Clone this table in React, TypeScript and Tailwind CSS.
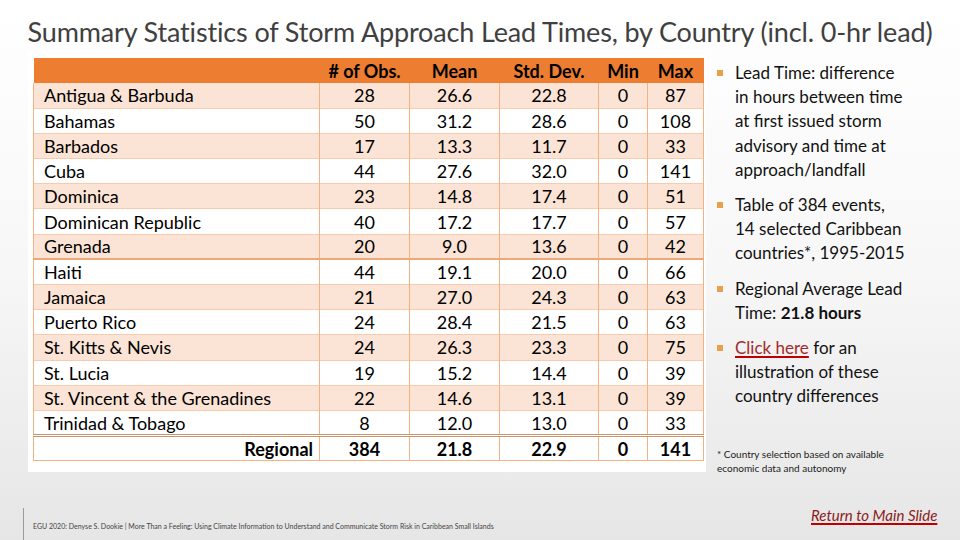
import React from "react";

const rows: [string, string, string, string, string, string][] = [
  ["Antigua & Barbuda", "28", "26.6", "22.8", "0", "87"],
  ["Bahamas", "50", "31.2", "28.6", "0", "108"],
  ["Barbados", "17", "13.3", "11.7", "0", "33"],
  ["Cuba", "44", "27.6", "32.0", "0", "141"],
  ["Dominica", "23", "14.8", "17.4", "0", "51"],
  ["Dominican Republic", "40", "17.2", "17.7", "0", "57"],
  ["Grenada", "20", "9.0", "13.6", "0", "42"],
  ["Haiti", "44", "19.1", "20.0", "0", "66"],
  ["Jamaica", "21", "27.0", "24.3", "0", "63"],
  ["Puerto Rico", "24", "28.4", "21.5", "0", "63"],
  ["St. Kitts & Nevis", "24", "26.3", "23.3", "0", "75"],
  ["St. Lucia", "19", "15.2", "14.4", "0", "39"],
  ["St. Vincent & the Grenadines", "22", "14.6", "13.1", "0", "39"],
  ["Trinidad & Tobago", "8", "12.0", "13.0", "0", "33"],
];

const font = { fontFamily: "Lato, 'Open Sans', sans-serif" };

function Bullet({ children }: { children: React.ReactNode }) {
  return (
    <div className="flex items-start">
      <span className="mt-[9px] mr-[12px] h-[6px] w-[6px] shrink-0 bg-[#E8A04C]" />
      <div className="w-[205px] whitespace-nowrap">{children}</div>
    </div>
  );
}

export default function App() {
  return (
    <div
      className="relative w-[960px] h-[540px] overflow-hidden bg-gradient-to-b from-white via-[#f7f7f7] to-[#e6e6e6] text-black"
      style={font}
    >
      <div className="pt-[15px] text-center text-[27px] leading-[34px] text-[#404040] tracking-[-0.15px]">
        Summary Statistics of Storm Approach Lead Times, by Country (incl. 0-hr lead)
      </div>
      <div className="flex mt-[4px] ml-[28px]">
        <div className="w-[678px] h-[419px] bg-white pt-[5px] pl-[5px]">
          <table className="border-collapse table-fixed w-[670px] text-[18px] leading-none">
            <colgroup>
              <col className="w-[286px]" />
              <col className="w-[90px]" />
              <col className="w-[90px]" />
              <col className="w-[99px]" />
              <col className="w-[49px]" />
              <col className="w-[56px]" />
            </colgroup>
            <thead>
              <tr className="h-[25px] bg-[#ED7D31] font-bold">
                <th></th>
                <th className="text-center">
                  # of Obs.
                </th>
                <th className="text-center">Mean</th>
                <th className="text-center">Std. Dev.</th>
                <th className="text-center">Min</th>
                <th className="text-center">Max</th>
              </tr>
            </thead>
            <tbody>
              {rows.map((r, i) => (
                <tr
                  key={r[0]}
                  className={
                    "h-[25.2px] " +
                    (i % 2 === 0 ? "bg-[#FBE4D5] " : "bg-white ") +
                    (i === 6
                      ? "border-b-2 border-b-[#EDA878] "
                      : i === 13
                      ? "border-b-[3px] border-double border-b-[#C8956A] "
                      : "border-b border-b-[#F8CBAD] ")
                  }
                >
                  <td className="pl-[10px] text-left border-x border-[#F4B183] whitespace-nowrap">{r[0]}</td>
                  {r.slice(1).map((v, j) => (
                    <td key={j} className="text-center border-x border-[#F4B183]">
                      {v}
                    </td>
                  ))}
                </tr>
              ))}
              <tr className="h-[25px] bg-white font-bold border-b border-b-[#F4B183]">
                <td className="pr-[6px] text-right border-x border-[#F4B183]">Regional</td>
                <td className="text-center border-x border-[#F4B183]">384</td>
                <td className="text-center border-x border-[#F4B183]">21.8</td>
                <td className="text-center border-x border-[#F4B183]">22.9</td>
                <td className="text-center border-x border-[#F4B183]">0</td>
                <td className="text-center border-x border-[#F4B183]">141</td>
              </tr>
            </tbody>
          </table>
        </div>
        <div className="ml-[11px] w-[230px] text-[17px] leading-[24.2px] text-[#111]">
          <div className="flex flex-col gap-[11px] pt-[8px]">
            <Bullet>
              Lead Time: difference
              <br />
              in hours between time
              <br />
              at first issued storm
              <br />
              advisory and time at
              <br />
              approach/landfall
            </Bullet>
            <Bullet>
              Table of 384 events,
              <br />
              14 selected Caribbean
              <br />
              countries*, 1995-2015
            </Bullet>
            <Bullet>
              Regional Average Lead
              <br />
              Time: <b>21.8 hours</b>
            </Bullet>
            <Bullet>
              <span className="text-[#A52A2A] underline decoration-[#C00000] decoration-2 underline-offset-2">
                Click here
              </span>{" "}
              for an
              <br />
              illustration of these
              <br />
              country differences
            </Bullet>
          </div>
          <div className="mt-[38px] w-[220px] whitespace-nowrap text-[10px] leading-[14px] text-[#222]">
            * Country selection based on available
            <br />
            economic data and autonomy
          </div>
        </div>
      </div>
      <div className="absolute left-[23px] top-[508px] h-[32px] w-px bg-[#9a9a9a]" />
      <div className="absolute left-[33px] top-[521px] text-[7px] text-[#444] whitespace-nowrap">
        EGU 2020: Denyse S. Dookie | More Than a Feeling: Using Climate Information to Understand and Communicate Storm Risk in Caribbean Small Islands
      </div>
      <div className="absolute left-[811px] top-[504px] text-[15px] italic text-[#8B1A1A] underline decoration-[#C00000] decoration-2 underline-offset-2">
        Return to Main Slide
      </div>
    </div>
  );
}
